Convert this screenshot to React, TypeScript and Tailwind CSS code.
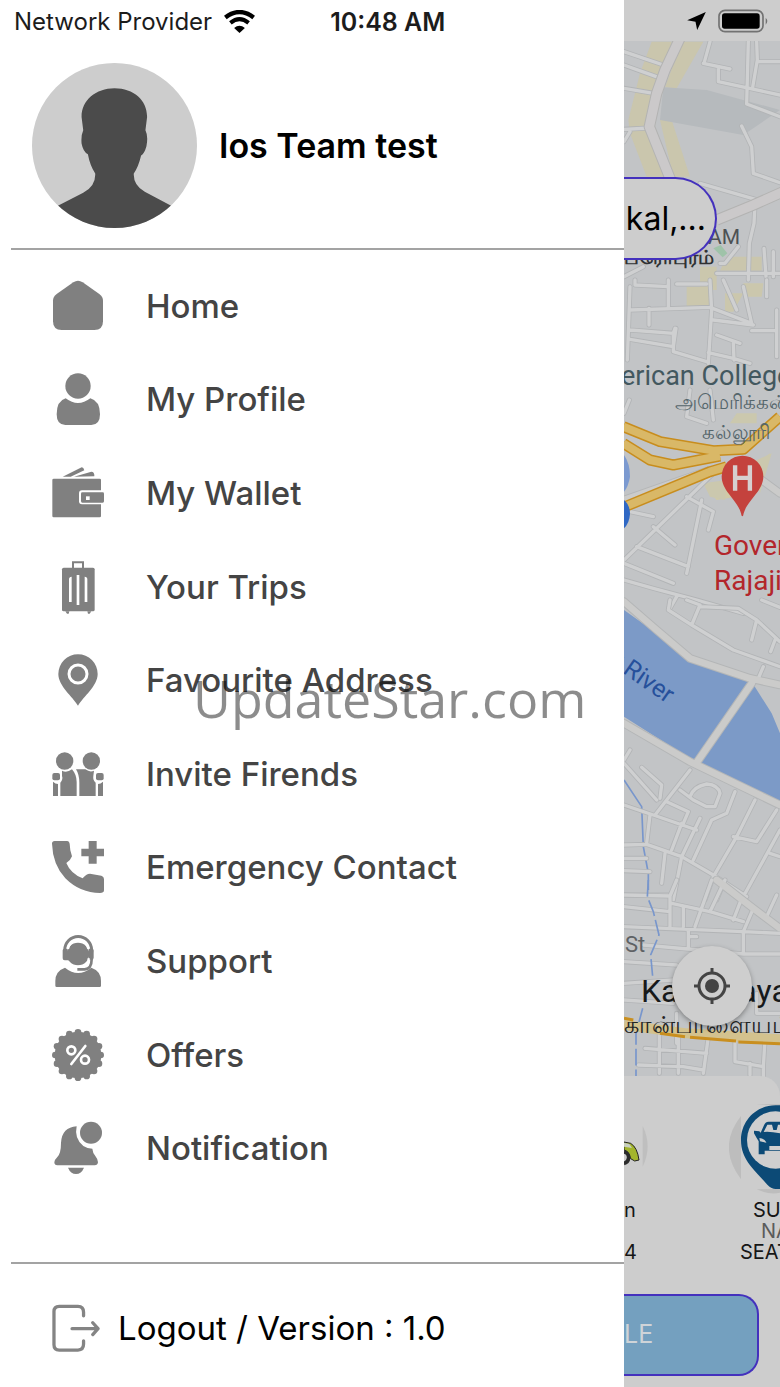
import React from "react";

interface MenuItem {
  label: string;
  icon: React.ReactNode;
}

const scallops = Array.from({ length: 16 }, (_, i) => {
  const a = (i * Math.PI) / 8;
  return { x: 78 + 68 * Math.cos(a), y: 78 + 68 * Math.sin(a) };
});

// Every icon is drawn on a 156 x 156 grid
const menuItems: MenuItem[] = [
  {
    label: "Home",
    icon: (
      <path d="M64 7Q78 -2 92 7L142 42Q153 50 153 62V124Q153 150 127 150H29Q3 150 3 124V62Q3 50 14 42Z" />
    ),
  },
  {
    label: "My Profile",
    icon: (
      <>
        <circle cx="78" cy="39" r="38" />
        <path d="M41 76Q78 104 115 76Q144 84 144 124Q144 156 118 156H40Q14 156 14 124Q14 84 41 76Z" />
      </>
    ),
  },
  {
    label: "My Wallet",
    icon: (
      <>
        <path d="M32 29L89 1Q94 0 97 10L56 29Z" />
        <path d="M66 29L118 14Q128 14 127 28Z" />
        <rect x="1" y="35" width="146" height="116" rx="4" />
        <path d="M156 70H90Q81 70 81 79V103Q81 112 90 112H156Z" fill="#fff" />
        <path d="M152 76H91Q87 76 87 80V102Q87 107 91 107H152Q156 107 156 103V80Q156 76 152 76Z" />
        <rect x="102" y="88" width="11" height="11" fill="#fff" />
      </>
    ),
  },
  {
    label: "Your Trips",
    icon: (
      <>
        <path d="M63 22V4H93V22" fill="none" stroke="currentColor" strokeWidth="6" />
        <rect x="30" y="20" width="98" height="131" rx="5" />
        <path d="M40 151H52L50 158H45ZM106 151H118L113 158H108Z" />
        <path
          d="M59 51Q55 51 55 55V123M78 42V132M98 51Q102 51 102 55V123"
          fill="none"
          stroke="#fff"
          strokeWidth="8"
        />
      </>
    ),
  },
  {
    label: "Favourite Address",
    icon: (
      <>
        <path d="M78 1A59 59 0 0 1 137 60C137 96 94 128 78 155C62 128 19 96 19 60A59 59 0 0 1 78 1Z" />
        <circle cx="78" cy="60" r="27" fill="none" stroke="#fff" strokeWidth="9" />
      </>
    ),
  },
  {
    label: "Invite Firends",
    icon: (
      <>
        <circle cx="38" cy="39" r="26" />
        <circle cx="118" cy="39" r="26" />
        <path d="M30 68Q44 76 60 64Q74 80 74 102V144H25V104Q34 94 30 84Z" />
        <path d="M72 64H100Q114 74 126 68L124 84Q122 96 131 104V144H82V104Q82 80 72 64Z" />
        <rect x="1" y="75" width="23" height="22" rx="6" />
        <rect x="132" y="75" width="23" height="22" rx="6" />
        <path d="M3 101Q10 108 18 108V144H3ZM153 101Q146 108 138 108V144H153Z" />
      </>
    ),
  },
  {
    label: "Emergency Contact",
    icon: (
      <>
        <path d="M8 0H46Q52 0 53 8L55 28L60 46Q56 58 43 66Q56 98 92 112Q102 98 114 98L148 104Q156 106 156 114V148Q156 156 144 156Q84 156 40 112Q2 70 0 8Q0 0 8 0Z" />
        <path d="M110 0H134V23H156V46H134V68H110V46H88V23H110Z" />
      </>
    ),
  },
  {
    label: "Support",
    icon: (
      <>
        <path d="M39 98Q78 130 118 98Q147 108 147 138V152Q147 156 143 156H14Q10 156 10 152V138Q10 108 39 98Z" />
        <circle cx="78" cy="57" r="34" />
        <path d="M38 52V46A40 41 0 0 1 119 46V52" fill="none" stroke="currentColor" strokeWidth="9" />
        <path d="M32 46Q32 41 37 41H46L52 76H38Q32 76 32 70ZM125 46Q125 41 120 41H111V74H119Q125 74 125 68Z" />
        <path d="M76 96H96Q110 96 110 70" fill="none" stroke="#fff" strokeWidth="7" />
        <path d="M76 103H98Q119 102 119 72" fill="none" stroke="currentColor" strokeWidth="8" />
        <path d="M48 42A31 31 0 0 1 109 42" fill="none" stroke="#fff" strokeWidth="6" />
      </>
    ),
  },
  {
    label: "Offers",
    icon: (
      <>
        <circle cx="78" cy="78" r="70" />
        {scallops.map((s, i) => (
          <circle key={i} cx={s.x} cy={s.y} r="10" />
        ))}
        <g fill="none" stroke="#fff" strokeWidth="8">
          <circle cx="58" cy="64" r="12" />
          <circle cx="99" cy="92" r="12" />
          <path d="M100 51L58 105" strokeLinecap="round" />
        </g>
      </>
    ),
  },
  {
    label: "Notification",
    icon: (
      <>
        <circle cx="117" cy="32" r="33" />
        <path d="M74 13Q66 50 94 72Q106 80 121 80Q122 92 130 102Q138 112 138 121Q137 130 128 130H16Q7 130 7 121Q7 114 16 105Q27 94 27 62Q30 16 74 13Z" />
        <path d="M48 137H96Q88 156 72 156Q56 156 48 137Z" />
      </>
    ),
  },
];

interface RoadTile {
  y: number;
  minor: string;
  major: string;
}

// Street geometry, one tile per stretch of the map, three units to the pixel
const tiles: RoadTile[] = [
  {
    y: 0,
    minor:
      "M42 155L160 195M42 195L145 232M42 265L130 280M42 388L118 384M42 425L60 395M280 190L360 207M325 207V245L510 285M415 125L410 312L510 350M440 125L442 180L428 262M445 185H510M395 378L425 440L430 520L510 548M270 550L460 605M435 610L432 670L418 730L415 840M330 790H345L385 740M320 820H510M462 745L468 830M490 755V830M300 125L282 190M42 830L100 800",
    major: "",
  },
  {
    y: 280,
    minor:
      "M60 20L52 240M75 0V15L175 20M175 0V80M60 90L300 82L425 130M117 85V135M60 150L190 160L195 145M60 178L190 200L198 145M190 160V215L290 245M300 0L305 90L295 250M320 165L390 190M370 190L372 240M295 218L370 235L420 250M340 0L380 90M400 20L425 130M425 152H500M500 90V230M200 12H290M310 120L430 135M240 330L230 410L290 430M300 330L310 420M470 0V50M42 400L58 360M230 650L310 695L295 750M275 660L230 880M130 740L195 795M80 800L235 860M310 580L42 840M60 695L130 710M42 850L190 910M42 900L130 925L260 960L400 1000M180 985L200 950M42 970L90 1000",
    major: "M42 660L300 570M455 600L510 640",
  },
  {
    y: 600,
    minor:
      "M180 0L175 30L245 75L270 15L230 0M270 20L385 25L440 60L510 125M245 75L370 150L510 200M440 60L425 120M495 120L482 155M460 200L445 235M455 0L510 22M42 490L140 600M42 480L60 450M95 502L155 555L150 595M240 510L135 645M42 615L130 645L260 690M210 570L250 600L290 620H315L330 580Q325 555 290 552Q250 560 240 590M170 605L235 635L220 670M120 645L110 730M42 735L110 733L215 770L310 825L410 890M270 655L215 770L190 900M215 670L185 750M375 575L350 640L305 660L250 780M435 600L380 710L310 830L285 900M500 630L440 725L370 710M510 690L400 890M480 760L510 770M165 760L155 850M42 775H110M42 812L120 815M42 885L185 885M340 850L320 900",
    major: "M42 5L140 90L240 175L420 235L510 255M42 370L240 485L510 615M425 250L262 485",
  },
  {
    y: 880,
    minor:
      "M42 45L180 48L200 0M180 48V140M42 80L180 95M42 140L400 155L510 160M100 195L400 222H510M42 245L200 255M235 150V200M240 170H260M220 80V140M185 70L300 95L400 125M305 0L255 140M345 0L300 95M395 55L370 120M430 85L400 155V220M500 45L470 110M42 310L190 300M42 360L190 370M200 400L200 490M148 460V580M205 460V580M105 505L290 520M85 555L220 560L280 570M295 470L280 580M375 480V545L460 560V590M420 550V585M465 480L460 560M440 340V400H510",
    major: "M320 0L430 85L510 145",
  },
];

const StreetMap = () => (
  <svg viewBox="0 0 156 1055" preserveAspectRatio="xMinYMin slice" className="absolute inset-0 h-full w-full" aria-hidden="true">
    <rect width="156" height="1055" fill="#c2c4c6" />
    <g transform="translate(-14 -41) scale(.33333)">
      <path d="M125 125H185L145 290L125 380L180 530H110L60 400L55 360L90 220ZM215 125H280L200 265L165 262ZM150 360H185L240 530H190ZM350 770H455V812H330Z" fill="#cac6ad" />
      <path d="M160 262L290 270L510 330L400 405L150 360Z" fill="#b6babd" />
      <path d="M310 745L332 735L352 760L338 772Z" fill="#9fc3a9" />
      <path d="M270 800H320V870H270ZM230 860H300V920H230ZM400 850H460L455 890H400ZM345 880H400L370 935H345Z" fill="#cbc7ad" />
      <path d="M285 1460L400 1430L480 1360L440 1480L320 1500Z" fill="#d0caa7" />
      <path d="M380 1240H440V1270H360ZM420 1390L485 1360L450 1480ZM280 1450L350 1440L345 1500L300 1490Z" fill="#cbc8ae" />
    </g>
    <g transform="translate(-14 559) scale(.33333)">
      <path d="M42 30L140 100L240 185L425 245L485 340L510 400V605L262 490L42 350Z" fill="#7c9ac7" />
      <path d="M42 540L95 620L100 740L115 820V870" fill="none" stroke="#7896cc" strokeWidth="5" />
    </g>
    {tiles.map((tile) => (
      <g
        key={tile.y}
        transform={`translate(-14 ${tile.y - 41}) scale(.33333)`}
        fill="none"
        strokeLinecap="round"
        strokeLinejoin="round"
      >
        <path d={tile.minor} stroke="#b2b4b6" strokeWidth="15" />
        {tile.major && <path d={tile.major} stroke="#b4b6b7" strokeWidth="26" />}
        <path d={tile.minor} stroke="#cfd0d1" strokeWidth="10" />
        {tile.major && <path d={tile.major} stroke="#cbcbca" strokeWidth="20" />}
      </g>
    ))}
    <g transform="translate(-14 -41) scale(.33333)" fill="none" strokeLinejoin="round">
      <path d="M212 110L165 210L140 280L118 380L182 540M320 660L430 615L520 575" stroke="#b3b3b2" strokeWidth="34" />
      <path d="M212 110L165 210L140 280L118 380L182 540M320 660L430 615L520 575" stroke="#cbc9ca" strokeWidth="28" />
    </g>
    {/* Ring road */}
    <g transform="translate(-14 239) scale(.33333)" fill="none" strokeLinejoin="round">
      <path d="M40 440L150 485L310 512L400 508L510 410M40 490L120 540L190 555L330 528M50 678L300 575L350 560" stroke="#c88d1d" strokeWidth="33" />
      <path d="M40 440L150 485L310 512L400 508L510 410M40 490L120 540L190 555L330 528M50 678L300 575L350 560" stroke="#d9b867" strokeWidth="24" />
      <path d="M42 525Q60 550 60 590Q55 620 42 635Z" fill="#7c9ad0" />
      <path d="M42 660Q60 675 60 702Q58 730 42 745Z" fill="#3068c4" />
    </g>
    <g transform="translate(-14 839) scale(.33333)" fill="none">
      <path d="M115 0L112 50L130 95L147 165L122 225L128 290M98 385L78 460V590" stroke="#7896cc" strokeWidth="5" strokeDasharray="50 12" />
      <path d="M42 435L230 460L510 478" stroke="#d3c28e" strokeWidth="30" />
      <path d="M42 415L70 420M150 460L225 470M240 472L378 483M385 486L510 491" stroke="#c98f1f" strokeWidth="9" />
    </g>
    <text transform="translate(-17 621) rotate(35)" fill="#26509b" fontSize="25" className="font-[Roboto]">
      y River
    </text>
  </svg>
);

const HospitalPin = () => (
  <svg viewBox="334 524 128 184" className="absolute left-[97px] top-[414px] h-[62px] w-[43px]" aria-hidden="true">
    <path d="M398 526A62 62 0 0 1 460 588C460 634 408 660 400 704Q398 708 395 704C388 660 336 634 336 588A62 62 0 0 1 398 526Z" fill="#c4423d" />
    <path d="M376 554V630M420 554V630M376 592H420" stroke="#d6d0d0" strokeWidth="13" />
  </svg>
);

const MapLabel = ({ className, children }: { className: string; children: React.ReactNode }) => (
  <span className={`absolute whitespace-nowrap font-[Roboto,'Noto_Sans',sans-serif] ${className}`}>{children}</span>
);

const MapPanel = () => (
  <div className="relative flex-1 overflow-hidden">
    <StreetMap />
    <MapLabel className="left-[84px] top-[184px] text-[21px] leading-6 text-[#4d5154]">AM</MapLabel>
    <MapLabel className="left-0 top-[204px] text-[20px] font-bold leading-6 text-[#303234]">பரோபுரம்</MapLabel>
    <MapLabel className="-left-[3px] top-[319px] text-[27px] leading-8 text-[#43585f]">erican College</MapLabel>
    <MapLabel className="left-[51px] top-[349px] text-[20px] font-medium leading-6 text-[#55666c]">அமெரிக்கன்</MapLabel>
    <MapLabel className="left-[78px] top-[379px] text-[20px] font-medium leading-6 text-[#55666c]">கல்லூரி</MapLabel>
    <MapLabel className="left-[90px] top-[487px] text-[28px] leading-[35px] text-[#b3262b]">
      Government
      <br />
      Rajaji
    </MapLabel>
    <MapLabel className="left-[1px] top-[892px] text-[22px] leading-6 text-[#5f6265]">St</MapLabel>
    <MapLabel className="left-[17px] top-[932px] text-[32px] leading-9 text-[#17191a]">Kanpalayam</MapLabel>
    <MapLabel className="left-0 top-[968px] text-[24px] font-medium leading-8 text-[#222425]">கான்பாளையம்</MapLabel>
    <HospitalPin />

    <div className="absolute left-0 top-[136px] flex h-[83px] w-[93px] items-center justify-end rounded-r-full border-2 border-l-0 border-[#4431bd] bg-[#cdcdcd] pr-[9px] text-[32px] text-black">
      kal,...
    </div>

    <button
      type="button"
      aria-label="Current location"
      className="absolute left-12 top-[905px] flex size-20 items-center justify-center rounded-full bg-[#cecece] shadow-[0_2px_5px_rgba(0,0,0,0.35)]"
    >
      <svg viewBox="0 0 36 36" className="size-9" fill="none" stroke="#444444" strokeWidth="3" aria-hidden="true">
        <circle cx="18" cy="18" r="13" />
        <path d="M18 0V5M18 31V36M0 18H5M31 18H36" />
        <circle cx="18" cy="18" r="7" fill="#444444" stroke="none" />
      </svg>
    </button>
  </div>
);

const VehiclePicker = () => (
  <div className="relative -mt-5 rounded-tr-[20px] bg-[#cdcdcd]">
    <div className="flex h-[218px] justify-between overflow-hidden pt-7 text-[20px] leading-[21px] text-[#161616]">
      <div className="w-6">
        <svg viewBox="42 76 72 276" className="h-[92px] w-6" aria-hidden="true">
          <path d="M98 142Q128 202 98 264Z" fill="#bfbfbf" />
          <path d="M42 190L62 194Q82 206 87 244L74 247L62 240Q56 216 42 214Z" fill="#a3b52c" stroke="#232323" strokeWidth="3" />
          <path d="M42 192L58 196L66 208L42 204Z" fill="#c8cfc0" />
          <path d="M42 220Q56 222 56 238Q54 252 42 254" fill="none" stroke="#2c2c2c" strokeWidth="11" />
        </svg>
        <p className="mt-1">n</p>
        <p className="mt-[21px]">4</p>
      </div>
      <div className="w-[51px]">
        <svg viewBox="357 76 153 276" className="h-[92px] w-[51px]" aria-hidden="true">
          <path d="M393 112Q320 205 393 302Z" fill="#bdbdbd" />
          <path d="M440 76Q475 64 510 67V82ZM440 332Q480 350 510 342V330Z" fill="#bdbdbd" />
          <path d="M497 80C440 80 393 125 393 185C393 245 435 275 472 318Q485 331 497 331H510V80Z" fill="#0c4a76" />
          <circle cx="497" cy="184" r="86" fill="#cfcfcf" />
          <path d="M446 176L462 140Q465 130 476 129H510V202H478V214H510V216H464V227H446V188L440 178L432 164V156L448 158L453 164Z" fill="#0c4a76" />
          <path d="M461 160L472 138H486L490 154L500 154L504 138H510V164Q480 158 461 160Z" fill="#cfcfcf" />
          <path d="M448 178Q462 178 470 192L450 188Z" fill="#cfcfcf" />
        </svg>
        <p className="mt-1 pl-6">SUV</p>
        <p className="whitespace-nowrap pl-8 text-[#5b5b5b]">NA</p>
        <p className="whitespace-nowrap pl-[11px]">SEATS</p>
      </div>
    </div>
    <button
      type="button"
      className="mb-[11px] block h-[82px] w-[135px] rounded-r-[20px] border-2 border-l-0 border-[#4431bd] bg-[#74a0bf] text-left text-[25px] text-[#cfd4d8]"
    >
      LE
    </button>
  </div>
);

const WifiIcon = () => (
  <svg viewBox="0 0 92 68" className="ml-3 h-[23px] w-[31px]" aria-hidden="true">
    <path d="M4 22Q46 -10 88 22" fill="none" stroke="#000" strokeWidth="13" />
    <path d="M19 38Q46 16 73 38" fill="none" stroke="#000" strokeWidth="12" />
    <path d="M30 53Q46 40 62 53L46 68Z" />
  </svg>
);

const Avatar = () => (
  <svg viewBox="96 188 496 496" className="size-[165px] rounded-full" role="img" aria-label="Profile photo">
    <rect x="96" y="188" width="496" height="496" fill="#cdcdcd" />
    <path
      d="M344 264C402 264 442 300 442 350L437 390Q446 408 440 438Q434 460 424 466Q416 500 402 520Q400 555 435 575L520 620V690H168V620L250 578Q288 558 286 520Q270 495 264 462Q250 456 245 430Q243 405 250 390L245 350C245 300 288 264 344 264Z"
      fill="#4b4b4b"
    />
  </svg>
);

const App: React.FC = () => {
  return (
    <div className="relative flex min-h-screen overflow-hidden bg-[#cdcdcd] font-[Inter,'Noto_Sans',sans-serif]">
      <aside className="flex w-4/5 flex-col bg-white">
        <div className="flex h-[41px] items-center whitespace-nowrap pl-[14px] pt-[2px] text-[24px] leading-7 text-[#1c1c1c]">
          <span>Network Provider</span>
          <WifiIcon />
          <span className="ml-[75px] text-[25px] font-semibold">10:48 AM</span>
        </div>

        <div className="flex items-center gap-[22px] pb-5 pl-8 pt-[22px]">
          <Avatar />
          <h1 className="text-[34px] font-semibold leading-10 text-black">Ios Team test</h1>
        </div>

        <hr className="ml-[11px] border-t-2 border-[#a3a3a3]" />

        <nav className="flex flex-1 flex-col pb-[67px] pt-[9px]">
          {menuItems.map((item) => (
            <a key={item.label} href="#" className="flex flex-1 items-center gap-[42px] pl-[52px]">
              <svg viewBox="0 0 156 156" className="size-[52px] shrink-0 overflow-visible fill-current text-[#808080]" aria-hidden="true">
                {item.icon}
              </svg>
              <span className="text-[33px] font-medium leading-10 text-[#444444]">{item.label}</span>
            </a>
          ))}
        </nav>

        <hr className="ml-[11px] border-t-2 border-[#a3a3a3]" />

        <button type="button" className="flex h-[123px] items-center gap-[18px] pl-[52px] pt-1 text-[33px] leading-10 text-black">
          <svg viewBox="156 188 146 146" className="size-12 shrink-0" fill="none" stroke="#848484" strokeWidth="10" strokeLinecap="round" strokeLinejoin="round" aria-hidden="true">
            <path d="M252 224V213Q252 195 235 195H178Q162 195 162 211V312Q162 328 178 328H235Q252 328 252 310V300" />
            <path d="M217 263H294M280 245L296 263L280 281" />
          </svg>
          Logout / Version : 1.0
        </button>
      </aside>

      <main className="flex flex-1 flex-col overflow-hidden">
        <div className="flex h-[41px] items-center justify-end gap-3 pr-[12px]">
          <svg viewBox="236 38 56 54" className="h-[18px] w-[19px]" aria-hidden="true">
            <path d="M292 38L266 92L261 67L236 63Z" />
          </svg>
          <svg viewBox="326 26 150 70" className="h-6 w-[50px]" aria-hidden="true">
            <rect x="329" y="29" width="132" height="64" rx="18" fill="none" stroke="#727272" strokeWidth="5" />
            <rect x="338" y="38" width="113" height="46" rx="8" />
            <path d="M469 51Q479 61 469 72Z" fill="#727272" />
          </svg>
        </div>
        <MapPanel />
        <VehiclePicker />
      </main>

      <span className="pointer-events-none absolute left-[193px] top-[662px] font-['Open_Sans',sans-serif] text-[52px] leading-[72px] text-black/45">
        UpdateStar.com
      </span>
    </div>
  );
};

export default App;
